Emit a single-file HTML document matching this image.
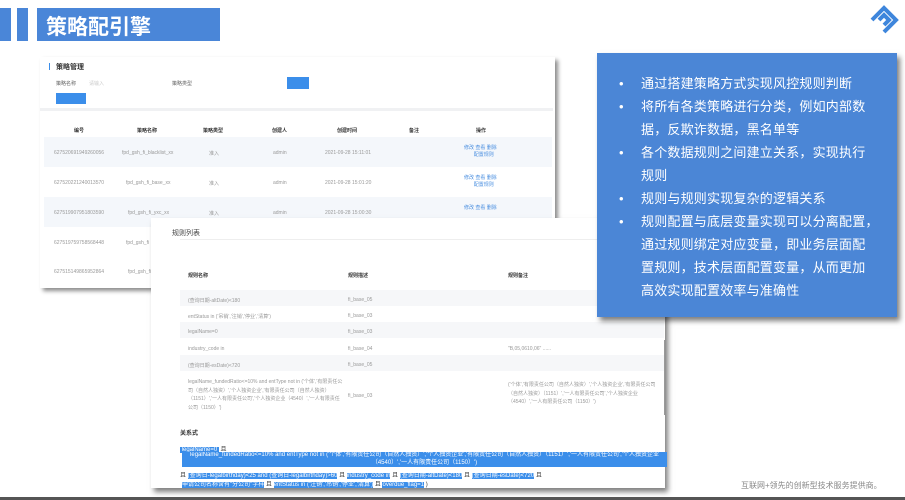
<!DOCTYPE html>
<html><head><meta charset="utf-8"><style>
*{margin:0;padding:0;box-sizing:border-box}
body{width:905px;height:500px;position:relative;overflow:hidden;background:#fff;font-family:"Liberation Sans","Noto Sans CJK SC",sans-serif}
.a{position:absolute}
.g{color:#999;font-size:5px;white-space:nowrap}
.h{color:#333;font-size:6px;font-weight:bold;white-space:nowrap}
.l{color:#4a8fe0;font-size:5px}
.hl{background:#3b8eea;color:#fff}
.b{position:relative;padding-left:22px;white-space:nowrap}
.b i{position:absolute;left:0;font-style:normal}
</style></head><body>
<div class="a" style="left:0;top:8px;width:11px;height:33px;background:#4a86d8"></div>
<div class="a" style="left:17px;top:8px;width:11px;height:33px;background:#4a86d8"></div>
<div class="a" style="left:37px;top:8px;width:183px;height:33px;background:#4a86d8"></div>
<div class="a" style="left:46px;top:11px;color:#fff;font-size:21px;font-weight:bold">策略配引擎</div>
<svg class="a" style="left:868px;top:4px" width="32" height="32" viewBox="0 0 32 32"><g fill="none" stroke="#3e86dc" stroke-width="4"><path d="M4 16 L16 4 L28 16 L16 28"/><path d="M11 16 L16 11 L21 16 L16 21"/></g></svg>

<div class="a" style="left:40px;top:57px;width:515px;height:231px;background:#fff;box-shadow:3px 3px 4px rgba(0,0,0,.45)"></div>
<div class="a" style="left:40px;top:108px;width:513px;height:3px;background:#f0f1f3"></div>
<div class="a" style="left:49px;top:63px;width:1px;height:7px;background:#3b8eea"></div>
<div class="a h" style="left:56px;top:62px;font-size:7px">策略管理</div>
<div class="a g" style="left:56px;top:80px;color:#666">策略名称</div>
<div class="a g" style="left:89px;top:80px;color:#ccc">请输入</div>
<div class="a g" style="left:172px;top:80px;color:#666">策略类型</div>
<div class="a" style="left:287px;top:77px;width:22px;height:12px;background:#3b8eea"></div>
<div class="a" style="left:56px;top:93px;width:30px;height:11px;background:#3b8eea"></div>
<div class="a" style="left:44px;top:137px;width:508px;height:30px;background:#f4f7fb"></div>
<div class="a" style="left:44px;top:197px;width:508px;height:30px;background:#f4f7fb"></div>
<div class="a h" style="left:74px;top:127px;font-size:5px">编号</div>
<div class="a h" style="left:137px;top:127px;font-size:5px">策略名称</div>
<div class="a h" style="left:203px;top:127px;font-size:5px">策略类型</div>
<div class="a h" style="left:272px;top:127px;font-size:5px">创建人</div>
<div class="a h" style="left:337px;top:127px;font-size:5px">创建时间</div>
<div class="a h" style="left:409px;top:127px;font-size:5px">备注</div>
<div class="a h" style="left:476px;top:127px;font-size:5px">操作</div>
<div class="a g" style="left:54px;top:150px">627520691949260056</div><div class="a g" style="left:122px;top:150px">fpd_gsh_fi_blacklist_xx</div><div class="a g" style="left:209px;top:150px">准入</div><div class="a g" style="left:273px;top:150px">admin</div><div class="a g" style="left:325px;top:150px">2021-09-28 15:11:01</div><div class="a l" style="left:464px;top:144px">修改 查看 删除<br>&nbsp;&nbsp;&nbsp;&nbsp;&nbsp;&nbsp;&nbsp;配置规则</div>
<div class="a g" style="left:54px;top:180px">627520221240013570</div><div class="a g" style="left:126px;top:180px">fpd_gsh_fi_base_xx</div><div class="a g" style="left:209px;top:180px">准入</div><div class="a g" style="left:273px;top:180px">admin</div><div class="a g" style="left:325px;top:180px">2021-09-28 15:01:20</div><div class="a l" style="left:464px;top:174px">修改 查看 删除<br>&nbsp;&nbsp;&nbsp;&nbsp;&nbsp;&nbsp;&nbsp;配置规则</div>
<div class="a g" style="left:54px;top:210px">627519907951803590</div><div class="a g" style="left:128px;top:210px">fpd_gsh_fi_yxc_xx</div><div class="a g" style="left:209px;top:210px">准入</div><div class="a g" style="left:273px;top:210px">admin</div><div class="a g" style="left:325px;top:210px">2021-09-28 15:00:30</div><div class="a l" style="left:464px;top:204px">修改 查看 删除</div>
<div class="a g" style="left:54px;top:240px">627519759758568448</div><div class="a g" style="left:126px;top:240px">fpd_gsh_fi</div>
<div class="a g" style="left:54px;top:269px">627515149865952864</div><div class="a g" style="left:128px;top:269px">fpd_gsh_fi</div>

<div class="a" style="left:151px;top:218px;width:514px;height:270px;background:#fff;box-shadow:3px 4px 5px rgba(0,0,0,.5)"></div>
<div class="a h" style="left:172px;top:228px;font-weight:normal;font-size:7px;color:#444">规则列表</div>
<div class="a" style="left:180px;top:239px;width:440px;height:1px;background:#eee"></div>
<div class="a h" style="left:188px;top:272px;font-size:5px">规则名称</div>
<div class="a h" style="left:348px;top:272px;font-size:5px">规则描述</div>
<div class="a h" style="left:508px;top:272px;font-size:5px">规则备注</div>
<div class="a" style="left:180px;top:290px;width:484px;height:16px;background:#f6f7f9"></div>
<div class="a" style="left:180px;top:322px;width:484px;height:16px;background:#f6f7f9"></div>
<div class="a" style="left:180px;top:355px;width:484px;height:16px;background:#f6f7f9"></div>
<div class="a" style="left:664px;top:340px;width:1px;height:75px;background:#999"></div>
<div class="a g" style="left:188px;top:297px">(查询日期-altDate)<180</div><div class="a g" style="left:348px;top:297px">fi_base_05</div>
<div class="a g" style="left:188px;top:313px">entStatus in ('吊销','注销','停业','清算')</div><div class="a g" style="left:348px;top:313px">fi_base_03</div>
<div class="a g" style="left:188px;top:329px">legalName=0</div><div class="a g" style="left:348px;top:329px">fi_base_03</div>
<div class="a g" style="left:188px;top:346px">industry_code in</div><div class="a g" style="left:348px;top:346px">fi_base_04</div><div class="a g" style="left:508px;top:346px">"B,05,0610,06" ......</div>
<div class="a g" style="left:188px;top:362px">(查询日期-esDate)<720</div><div class="a g" style="left:348px;top:362px">fi_base_05</div>
<div class="a g" style="left:188px;top:378px;line-height:8.5px;white-space:normal;width:155px">legalName_fundedRatio<=10% and entType not in ('个体','有限责任公司（自然人独资）','个人独资企业','有限责任公司（自然人独资）（1151）','一人有限责任公司','个人独资企业（4540）','一人有限责任公司（1150）')</div>
<div class="a g" style="left:348px;top:393px">fi_base_03</div>
<div class="a g" style="left:508px;top:381px;line-height:8.5px;white-space:normal;width:150px">('个体','有限责任公司（自然人独资）','个人独资企业','有限责任公司（自然人独资）（1151）','一人有限责任公司','个人独资企业（4540）','一人有限责任公司（1150）')</div>
<div class="a h" style="left:180px;top:428px;font-size:6px">关系式</div>
<div class="a" style="left:180px;top:444px;font-size:6px;color:#333;white-space:nowrap"><span class="hl">&nbsp;legalName=0&nbsp;</span> 且</div>
<div class="a hl" style="left:182px;top:452px;width:485px;height:15px;font-size:6px;text-align:center;line-height:7.5px;overflow:hidden">legalName_fundedRatio<=10% and entType not in ('个体','有限责任公司（自然人独资）','个人独资企业','有限责任公司（自然人独资）（1151）','一人有限责任公司','个人独资企业（4540）','一人有限责任公司（1150）')</div>
<div class="a" style="left:180px;top:470px;font-size:6px;color:#333;white-space:nowrap">且 <span class="hl">(查询日-legalbirthday)<25 and (查询日-legalbirthday)>60</span> 且 <span class="hl">industry_code in</span> 且 <span class="hl">(查询日期-altDate)<180</span> 且 <span class="hl">(查询日期-esDate)<720</span> 且</div>
<div class="a" style="left:182px;top:479px;font-size:6px;color:#333;white-space:nowrap"><span class="hl">申请公司名称含有"分公司"字样</span> 且 <span class="hl">entStatus in ('注销','吊销','停业','清算')</span> 且 <span class="hl">overdue_flag=1</span> )</div>

<div class="a" style="left:597px;top:53px;width:300px;height:264px;background:#4b86d6;box-shadow:3px 4px 5px rgba(0,0,0,.5)"></div>
<div class="a" style="left:619px;top:72px;color:#fff;font-size:13px;letter-spacing:0.2px;line-height:23px">
<div class="b"><i>•</i>通过搭建策略方式实现风控规则判断</div>
<div class="b"><i>•</i>将所有各类策略进行分类，例如内部数<br>据，反欺诈数据，黑名单等</div>
<div class="b"><i>•</i>各个数据规则之间建立关系，实现执行<br>规则</div>
<div class="b"><i>•</i>规则与规则实现复杂的逻辑关系</div>
<div class="b"><i>•</i>规则配置与底层变量实现可以分离配置，<br>通过规则绑定对应变量，即业务层面配<br>置规则，技术层面配置变量，从而更加<br>高效实现配置效率与准确性</div>
</div>
<div class="a" style="left:741px;top:480px;font-size:8px;color:#888;white-space:nowrap">互联网+领先的创新型技术服务提供商。</div>
<div class="a" style="left:0;top:497px;width:905px;height:3px;background:#555"></div>
</body></html>
